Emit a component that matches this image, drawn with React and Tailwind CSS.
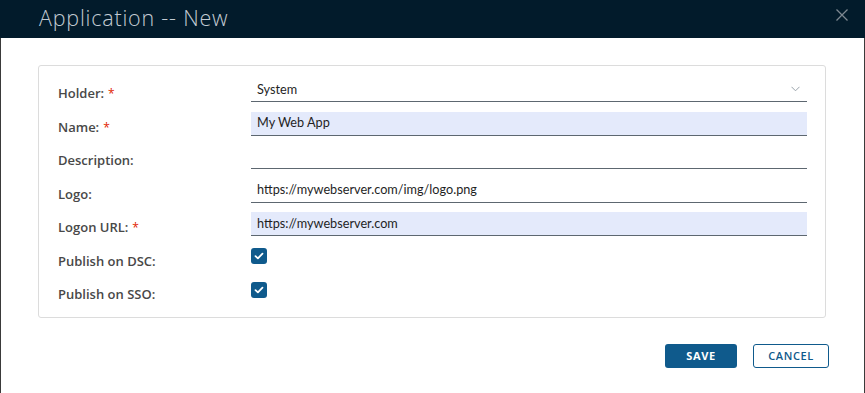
import React from 'react';

const fields = [
  { label: 'Holder:', required: true, value: 'System', select: true },
  { label: 'Name:', required: true, value: 'My Web App', filled: true },
  { label: 'Description:', value: '' },
  { label: 'Logo:', value: 'https://mywebserver.com/img/logo.png' },
  { label: 'Logon URL:', required: true, value: 'https://mywebserver.com', filled: true },
];

const checks = ['Publish on DSC:', 'Publish on SSO:'];

const Label = ({ text, required }) => (
  <div
    className="w-[193px] shrink-0 mt-[7px] text-[13px] leading-[16px] font-semibold text-[#484848]"
    style={{ fontFamily: '"Open Sans", sans-serif' }}
  >
    {text}
    {required && <span className="ml-[4px] text-[12px] font-normal text-[#e12200]">*</span>}
  </div>
);

const CheckBox = () => (
  <div className="mt-[2.5px] w-4 h-4 rounded-[3px] bg-[#0f5a8c] flex items-center justify-center">
    <svg width="10" height="8" viewBox="0 0 10 8" fill="none">
      <path d="M1.5 4.2 L3.9 6.4 L8.5 1.6" stroke="white" strokeWidth="1.8" strokeLinecap="round" strokeLinejoin="round" />
    </svg>
  </div>
);

export default function App() {
  return (
    <div className="w-[865px] h-[393px] bg-white flex flex-col" style={{ fontFamily: 'Lato, "Open Sans", sans-serif' }}>
      {/* Header */}
      <div className="h-[38px] bg-[#021b2b] flex items-center justify-between pl-[39px] pr-[17px]">
        <div
          className="text-[21.5px] leading-none font-light tracking-[0.8px] text-[#c3cbd3] mt-[-2px]"
          style={{ fontFamily: '"Open Sans", sans-serif' }}
        >
          Application -- New
        </div>
        <svg width="12" height="12" viewBox="0 0 12 12" className="mt-[-8px]">
          <path d="M0.5 0.5 L11.5 11.5 M11.5 0.5 L0.5 11.5" stroke="#7d8891" strokeWidth="1.3" />
        </svg>
      </div>

      {/* Body */}
      <div className="flex-1 flex flex-col border-l border-r border-[#3a3a3a]">
        <div className="ml-[37px] mr-[38px] mt-[27px] h-[253px] border border-[#dcdcdc] rounded-[3px] pl-[19px] pr-[18px] pt-[12px] flex flex-col gap-y-[9.5px]">
          {fields.map((f) => (
            <div key={f.label} className="h-6 flex items-start">
              <Label text={f.label} required={f.required} />
              <div
                className={`flex-1 h-6 border-b border-[#5d6770] pl-[6px] pr-[6px] flex items-center justify-between text-[12.7px] text-[#1f1f1f] ${f.filled ? 'bg-[#e4eafb]' : ''}`}
              >
                <span>{f.value}</span>
                {f.select && (
                  <svg width="9" height="6" viewBox="0 0 9 6" className="mr-[1px] mt-[-1px]">
                    <path d="M0.5 0.8 L4.5 4.8 L8.5 0.8" stroke="#9aa3ab" strokeWidth="1" fill="none" />
                  </svg>
                )}
              </div>
            </div>
          ))}
          {checks.map((c) => (
            <div key={c} className="h-6 flex items-start">
              <Label text={c} />
              <CheckBox />
            </div>
          ))}
        </div>

        <div className="mt-[26px] flex justify-end gap-4 pr-[35px]" style={{ fontFamily: '"Open Sans", sans-serif' }}>
          <button className="w-[72px] h-6 rounded-[3px] bg-[#0f5a8c] text-white text-[11px] font-bold tracking-[0.6px]">
            SAVE
          </button>
          <button className="w-[76px] h-6 rounded-[3px] border border-[#0f5a8c] text-[#0f5a8c] text-[11px] font-semibold tracking-[0.6px]">
            CANCEL
          </button>
        </div>
      </div>
    </div>
  );
}
